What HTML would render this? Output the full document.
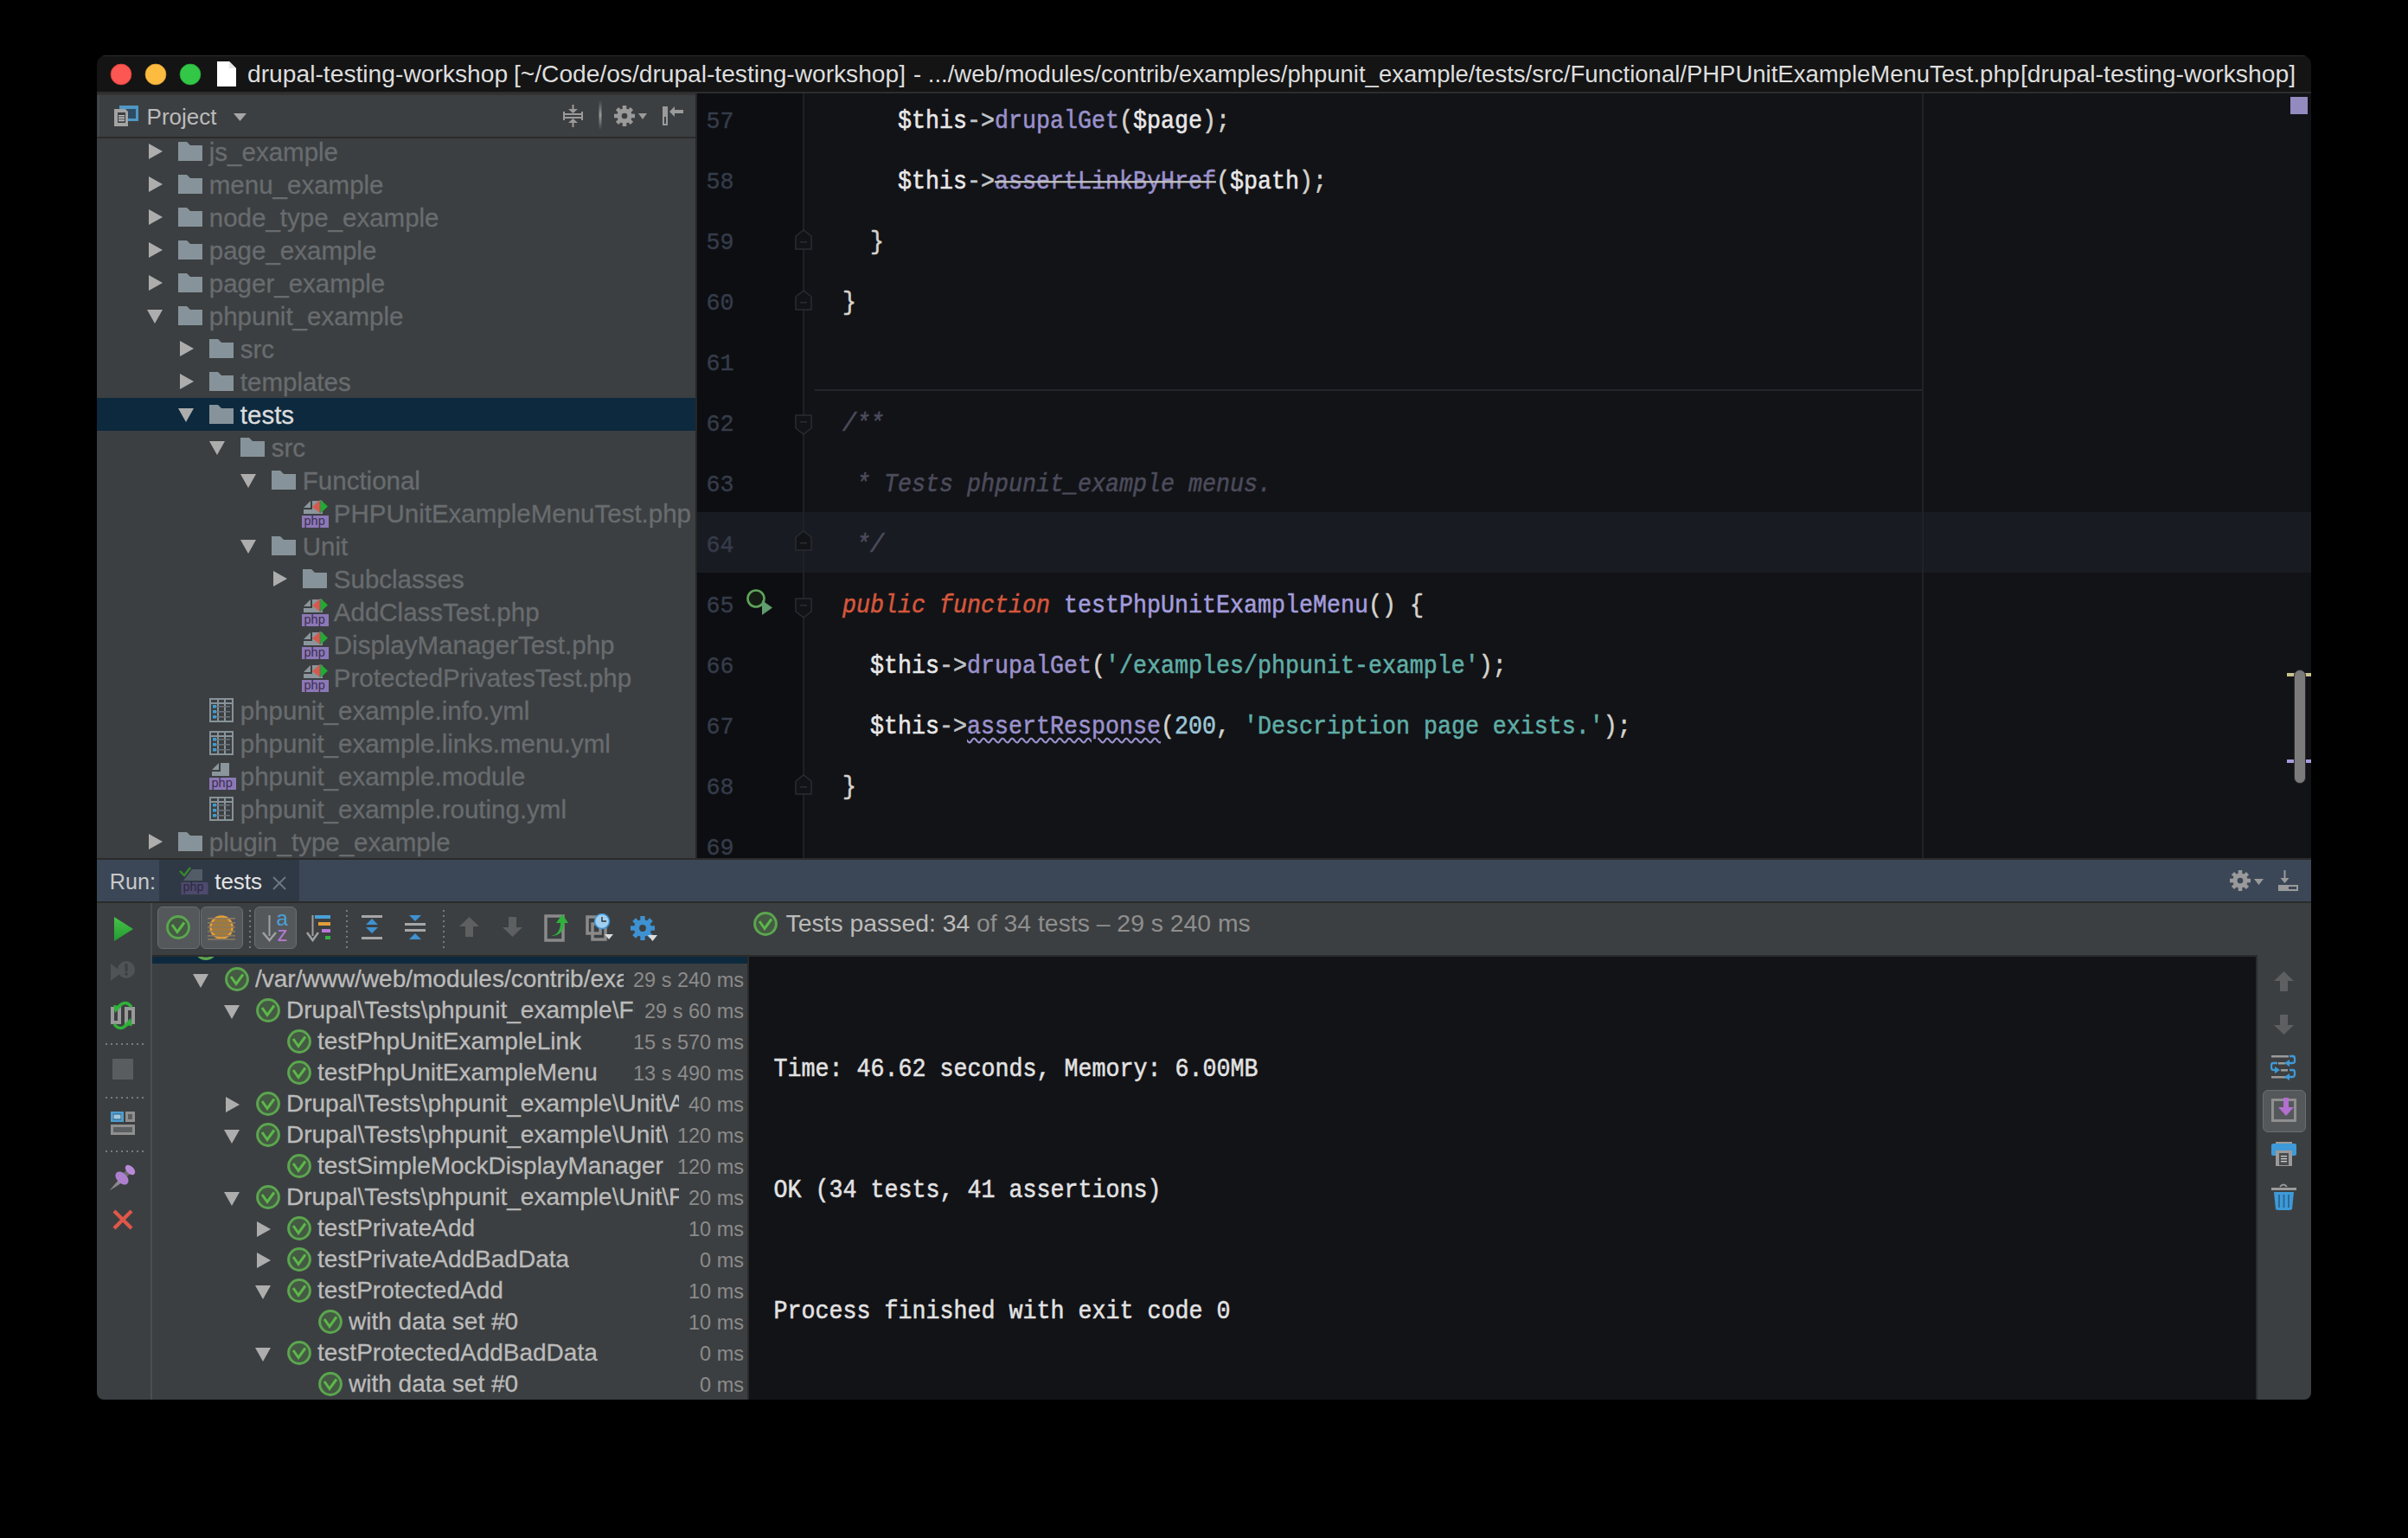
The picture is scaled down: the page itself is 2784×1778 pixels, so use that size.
<!DOCTYPE html>
<html><head><meta charset="utf-8">
<style>
html,body{margin:0;padding:0;background:#000;width:2784px;height:1778px;overflow:hidden}
*{box-sizing:border-box}
.a{position:absolute}
.t{white-space:pre;line-height:1}
.t span{-webkit-text-stroke:inherit}
.s3{-webkit-text-stroke:0.3px currentColor}
svg{display:block}
#win{position:absolute;left:0;top:0;width:2784px;height:1778px;clip-path:inset(64px 112px 160px 112px round 10px 10px 8px 8px);}
</style></head><body>
<div id="win">
<div class="a" style="left:112px;top:64px;width:2560px;height:42px;background:#141414;"></div>
<div class="a" style="left:112px;top:64px;width:2560px;height:1px;background:#2f2f2f;"></div>
<div class="a" style="left:112px;top:106px;width:2560px;height:2px;background:#2d2d2d;"></div>
<div class="a" style="left:112px;top:108px;width:692px;height:2px;background:#333333;"></div>
<div class="a" style="left:112px;top:110px;width:692px;height:48px;background:#3c3f41;"></div>
<div class="a" style="left:113px;top:110px;width:2px;height:48px;background:#45484b;"></div>
<div class="a" style="left:112px;top:158px;width:692px;height:2px;background:#2b2b2b;"></div>
<div class="a" style="left:112px;top:160px;width:692px;height:832px;background:#3c3f41;"></div>
<div class="a" style="left:804px;top:108px;width:2px;height:884px;background:#262626;"></div>
<div class="a" style="left:806px;top:108px;width:122px;height:884px;background:#0d0e12;"></div>
<div class="a" style="left:928px;top:108px;width:2px;height:884px;background:#1e2025;"></div>
<div class="a" style="left:930px;top:108px;width:1742px;height:884px;background:#121317;"></div>
<div class="a" style="left:112px;top:992px;width:2560px;height:2px;background:#2b2b2b;"></div>
<div class="a" style="left:112px;top:994px;width:2560px;height:48px;background:#3b4757;"></div>
<div class="a" style="left:112px;top:1042px;width:2560px;height:2px;background:#2b2b2b;"></div>
<div class="a" style="left:112px;top:1044px;width:2560px;height:574px;background:#3c3f41;"></div>
<div class="a" style="left:174px;top:1044px;width:2px;height:574px;background:#4b4e50;"></div>
<div class="a" style="left:176px;top:1104px;width:2434px;height:2px;background:#2b2b2b;"></div>
<div class="a" style="left:864px;top:1106px;width:2px;height:512px;background:#2b2b2b;"></div>
<div class="a" style="left:866px;top:1106px;width:1742px;height:512px;background:#121317;"></div>
<div class="a" style="left:2608px;top:1104px;width:2px;height:514px;background:#2b2b2b;"></div>
<svg class="a" style="left:127px;top:73px" width="26" height="26" viewBox="0 0 26 26"><circle cx="13" cy="13" r="11.9" fill="#fc5753" stroke="#de3f39" stroke-width="0.8"/></svg>
<svg class="a" style="left:167px;top:73px" width="26" height="26" viewBox="0 0 26 26"><circle cx="13" cy="13" r="11.9" fill="#fdbc40" stroke="#de9f34" stroke-width="0.8"/></svg>
<svg class="a" style="left:207px;top:73px" width="26" height="26" viewBox="0 0 26 26"><circle cx="13" cy="13" r="11.9" fill="#33c748" stroke="#27aa35" stroke-width="0.8"/></svg>
<svg class="a" style="left:250px;top:70px" width="24" height="31" viewBox="0 0 24 31"><path d="M1 1 H15 L23 9 V30 H1 Z" fill="#fff"/><path d="M15 1 V9 H23" fill="#e6e6e6"/></svg>
<div class="a t" style="left:286.0px;top:72.0px;font-family:'Liberation Sans',sans-serif;font-size:27.75px;color:#dedede;transform:scaleX(1.017);transform-origin:0 0">drupal-testing-workshop</div>
<div class="a t" style="left:594.0px;top:72.0px;font-family:'Liberation Sans',sans-serif;font-size:27.75px;color:#dedede;transform:scaleX(1.0144);transform-origin:0 0">[~/Code/os/drupal-testing-workshop]</div>
<div class="a t" style="left:1055.5px;top:72.0px;font-family:'Liberation Sans',sans-serif;font-size:27.75px;color:#dedede;transform:scaleX(0.9907);transform-origin:0 0">- .../web/modules/contrib/examples/phpunit_example/tests/src/Functional/PHPUnitExampleMenuTest.php</div>
<div class="a t" style="left:2335.5px;top:72.0px;font-family:'Liberation Sans',sans-serif;font-size:27.75px;color:#dedede;transform:scaleX(1.0207);transform-origin:0 0">[drupal-testing-workshop]</div>
<svg class="a" style="left:132px;top:121px" width="29" height="26" viewBox="0 0 29 26"><rect x="6" y="1" width="22" height="18" fill="#4f97c4"/><rect x="9" y="5" width="16" height="11" fill="#2d4c63"/><path d="M0 5 H13 L16 8 V25 H0 Z" fill="#a3a3a3"/><rect x="4" y="9" width="9" height="12" fill="#3c3f41"/><rect x="5" y="12" width="7" height="1.2" fill="#c8c8c8"/><rect x="5" y="14" width="7" height="1.2" fill="#c8c8c8"/><rect x="5" y="16" width="7" height="1.2" fill="#c8c8c8"/><rect x="5" y="18" width="7" height="1.2" fill="#c8c8c8"/></svg>
<div class="a t" style="left:169.6px;top:121.7px;font-family:'Liberation Sans',sans-serif;font-size:26px;color:#bbbbbb;">Project</div>
<svg class="a" style="left:270px;top:131px" width="15" height="9" viewBox="0 0 15 9"><path d="M0 0 H15 L7.5 9 Z" fill="#a6a6a6"/></svg>
<svg class="a" style="left:651px;top:120px" width="23" height="28" viewBox="0 0 23 28"><rect x="10.5" y="1" width="2" height="6" fill="#9a9a9a"/><path d="M6 6 H17 L11.5 11 Z" fill="#9a9a9a"/><rect x="0" y="9" width="2" height="10" fill="#9a9a9a"/><rect x="21" y="9" width="2" height="10" fill="#9a9a9a"/><rect x="0" y="11" width="23" height="2" fill="#9a9a9a"/><rect x="0" y="15" width="23" height="2" fill="#9a9a9a"/><path d="M6 22 H17 L11.5 17 Z" fill="#9a9a9a"/><rect x="10.5" y="21" width="2" height="6" fill="#9a9a9a"/></svg>
<svg class="a" style="left:692px;top:116px" width="4" height="34" viewBox="0 0 4 34"><defs><linearGradient id="sg" x1="0" y1="0" x2="0" y2="1"><stop offset="0" stop-color="#3c3f41"/><stop offset="0.5" stop-color="#9a9a9a"/><stop offset="1" stop-color="#3c3f41"/></linearGradient></defs><rect x="0.5" y="0" width="3" height="34" fill="url(#sg)"/></svg>
<svg class="a" style="left:710px;top:122px" width="24" height="24" viewBox="0 0 24 24"><circle cx="12.0" cy="12.0" r="8.64" fill="#9a9a9a"/><rect x="9.719999999999999" y="0" width="4.5600000000000005" height="7.199999999999999" fill="#9a9a9a" transform="rotate(0 12.0 12.0)"/><rect x="9.719999999999999" y="0" width="4.5600000000000005" height="7.199999999999999" fill="#9a9a9a" transform="rotate(45 12.0 12.0)"/><rect x="9.719999999999999" y="0" width="4.5600000000000005" height="7.199999999999999" fill="#9a9a9a" transform="rotate(90 12.0 12.0)"/><rect x="9.719999999999999" y="0" width="4.5600000000000005" height="7.199999999999999" fill="#9a9a9a" transform="rotate(135 12.0 12.0)"/><rect x="9.719999999999999" y="0" width="4.5600000000000005" height="7.199999999999999" fill="#9a9a9a" transform="rotate(180 12.0 12.0)"/><rect x="9.719999999999999" y="0" width="4.5600000000000005" height="7.199999999999999" fill="#9a9a9a" transform="rotate(225 12.0 12.0)"/><rect x="9.719999999999999" y="0" width="4.5600000000000005" height="7.199999999999999" fill="#9a9a9a" transform="rotate(270 12.0 12.0)"/><rect x="9.719999999999999" y="0" width="4.5600000000000005" height="7.199999999999999" fill="#9a9a9a" transform="rotate(315 12.0 12.0)"/><circle cx="12.0" cy="12.0" r="3.3600000000000003" fill="#3c3f41"/></svg>
<svg class="a" style="left:738px;top:131px" width="10" height="7" viewBox="0 0 10 7"><path d="M0 0 H10 L5 7 Z" fill="#9a9a9a"/></svg>
<svg class="a" style="left:765px;top:122px" width="26" height="24" viewBox="0 0 26 24"><rect x="1" y="1" width="6" height="22" fill="#9a9a9a"/><rect x="3" y="13" width="2" height="8" fill="#3c3f41"/><path d="M9 7 L15 1 V5 H25 V9 H15 V13 Z" fill="#9a9a9a"/></svg>
<div class="a" style="left:112px;top:460px;width:692px;height:38px;background:#0d293e;"></div>
<div class="a" style="left:112px;top:160px;width:692px;height:832px;overflow:hidden">
<div class="a" style="left:-112px;top:-160px;width:2784px;height:1778px">
<svg class="a" style="left:172px;top:166px" width="16" height="18" viewBox="0 0 16 18"><path d="M0 0 L16 9 L0 18 Z" fill="#adadad"/></svg>
<svg class="a" style="left:206px;top:164px" width="28" height="22" viewBox="0 0 28 22"><path d="M0 0 H10 L14 4 H28 V22 H0 Z" fill="#87939a"/></svg>
<div class="a t" style="left:241.8px;top:160.9px;font-family:'Liberation Sans',sans-serif;font-size:29.5px;color:#686c6f;-webkit-text-stroke:0.3px currentColor">js_example</div>
<svg class="a" style="left:172px;top:204px" width="16" height="18" viewBox="0 0 16 18"><path d="M0 0 L16 9 L0 18 Z" fill="#adadad"/></svg>
<svg class="a" style="left:206px;top:202px" width="28" height="22" viewBox="0 0 28 22"><path d="M0 0 H10 L14 4 H28 V22 H0 Z" fill="#87939a"/></svg>
<div class="a t" style="left:241.8px;top:198.9px;font-family:'Liberation Sans',sans-serif;font-size:29.5px;color:#686c6f;-webkit-text-stroke:0.3px currentColor">menu_example</div>
<svg class="a" style="left:172px;top:242px" width="16" height="18" viewBox="0 0 16 18"><path d="M0 0 L16 9 L0 18 Z" fill="#adadad"/></svg>
<svg class="a" style="left:206px;top:240px" width="28" height="22" viewBox="0 0 28 22"><path d="M0 0 H10 L14 4 H28 V22 H0 Z" fill="#87939a"/></svg>
<div class="a t" style="left:241.8px;top:236.9px;font-family:'Liberation Sans',sans-serif;font-size:29.5px;color:#686c6f;-webkit-text-stroke:0.3px currentColor">node_type_example</div>
<svg class="a" style="left:172px;top:280px" width="16" height="18" viewBox="0 0 16 18"><path d="M0 0 L16 9 L0 18 Z" fill="#adadad"/></svg>
<svg class="a" style="left:206px;top:278px" width="28" height="22" viewBox="0 0 28 22"><path d="M0 0 H10 L14 4 H28 V22 H0 Z" fill="#87939a"/></svg>
<div class="a t" style="left:241.8px;top:274.9px;font-family:'Liberation Sans',sans-serif;font-size:29.5px;color:#686c6f;-webkit-text-stroke:0.3px currentColor">page_example</div>
<svg class="a" style="left:172px;top:318px" width="16" height="18" viewBox="0 0 16 18"><path d="M0 0 L16 9 L0 18 Z" fill="#adadad"/></svg>
<svg class="a" style="left:206px;top:316px" width="28" height="22" viewBox="0 0 28 22"><path d="M0 0 H10 L14 4 H28 V22 H0 Z" fill="#87939a"/></svg>
<div class="a t" style="left:241.8px;top:312.9px;font-family:'Liberation Sans',sans-serif;font-size:29.5px;color:#686c6f;-webkit-text-stroke:0.3px currentColor">pager_example</div>
<svg class="a" style="left:170px;top:358px" width="18" height="16" viewBox="0 0 18 16"><path d="M0 0 H18 L9 16 Z" fill="#adadad"/></svg>
<svg class="a" style="left:206px;top:354px" width="28" height="22" viewBox="0 0 28 22"><path d="M0 0 H10 L14 4 H28 V22 H0 Z" fill="#87939a"/></svg>
<div class="a t" style="left:241.8px;top:350.9px;font-family:'Liberation Sans',sans-serif;font-size:29.5px;color:#686c6f;-webkit-text-stroke:0.3px currentColor">phpunit_example</div>
<svg class="a" style="left:208px;top:394px" width="16" height="18" viewBox="0 0 16 18"><path d="M0 0 L16 9 L0 18 Z" fill="#adadad"/></svg>
<svg class="a" style="left:242px;top:392px" width="28" height="22" viewBox="0 0 28 22"><path d="M0 0 H10 L14 4 H28 V22 H0 Z" fill="#87939a"/></svg>
<div class="a t" style="left:277.8px;top:388.9px;font-family:'Liberation Sans',sans-serif;font-size:29.5px;color:#686c6f;-webkit-text-stroke:0.3px currentColor">src</div>
<svg class="a" style="left:208px;top:432px" width="16" height="18" viewBox="0 0 16 18"><path d="M0 0 L16 9 L0 18 Z" fill="#adadad"/></svg>
<svg class="a" style="left:242px;top:430px" width="28" height="22" viewBox="0 0 28 22"><path d="M0 0 H10 L14 4 H28 V22 H0 Z" fill="#87939a"/></svg>
<div class="a t" style="left:277.8px;top:426.9px;font-family:'Liberation Sans',sans-serif;font-size:29.5px;color:#686c6f;-webkit-text-stroke:0.3px currentColor">templates</div>
<svg class="a" style="left:206px;top:472px" width="18" height="16" viewBox="0 0 18 16"><path d="M0 0 H18 L9 16 Z" fill="#adadad"/></svg>
<svg class="a" style="left:242px;top:468px" width="28" height="22" viewBox="0 0 28 22"><path d="M0 0 H10 L14 4 H28 V22 H0 Z" fill="#87939a"/></svg>
<div class="a t" style="left:277.8px;top:464.9px;font-family:'Liberation Sans',sans-serif;font-size:29.5px;color:#dcdcdc;-webkit-text-stroke:0.3px currentColor">tests</div>
<svg class="a" style="left:242px;top:510px" width="18" height="16" viewBox="0 0 18 16"><path d="M0 0 H18 L9 16 Z" fill="#adadad"/></svg>
<svg class="a" style="left:278px;top:506px" width="28" height="22" viewBox="0 0 28 22"><path d="M0 0 H10 L14 4 H28 V22 H0 Z" fill="#87939a"/></svg>
<div class="a t" style="left:313.8px;top:502.9px;font-family:'Liberation Sans',sans-serif;font-size:29.5px;color:#686c6f;-webkit-text-stroke:0.3px currentColor">src</div>
<svg class="a" style="left:278px;top:548px" width="18" height="16" viewBox="0 0 18 16"><path d="M0 0 H18 L9 16 Z" fill="#adadad"/></svg>
<svg class="a" style="left:314px;top:544px" width="28" height="22" viewBox="0 0 28 22"><path d="M0 0 H10 L14 4 H28 V22 H0 Z" fill="#87939a"/></svg>
<div class="a t" style="left:349.8px;top:540.9px;font-family:'Liberation Sans',sans-serif;font-size:29.5px;color:#686c6f;-webkit-text-stroke:0.3px currentColor">Functional</div>
<svg class="a" style="left:349px;top:578px" width="31" height="18" viewBox="0 0 31 18"><path d="M2 9 L10 1 V9 Z" fill="#8a969c"/><path d="M12 1 H24 V16 H2 V11 H12 Z" fill="#8a969c"/><path d="M12 8 L21 0 V15 Z" fill="#d65a4a"/><rect x="20.5" y="0" width="1.5" height="15" fill="#6b6f72"/><path d="M22 0 L30 7.5 L22 15 Z" fill="#20ad2e"/></svg>
<div class="a" style="left:349px;top:596px;width:31px;height:14px;background:#8c78b6;overflow:hidden"><div class="a t" style="left:2.5px;top:-0.8px;font-family:'Liberation Sans',sans-serif;font-size:14.5px;color:#3a2f52;line-height:1">php</div></div>
<div class="a t" style="left:385.8px;top:578.9px;font-family:'Liberation Sans',sans-serif;font-size:29.5px;color:#686c6f;-webkit-text-stroke:0.3px currentColor">PHPUnitExampleMenuTest.php</div>
<svg class="a" style="left:278px;top:624px" width="18" height="16" viewBox="0 0 18 16"><path d="M0 0 H18 L9 16 Z" fill="#adadad"/></svg>
<svg class="a" style="left:314px;top:620px" width="28" height="22" viewBox="0 0 28 22"><path d="M0 0 H10 L14 4 H28 V22 H0 Z" fill="#87939a"/></svg>
<div class="a t" style="left:349.8px;top:616.9px;font-family:'Liberation Sans',sans-serif;font-size:29.5px;color:#686c6f;-webkit-text-stroke:0.3px currentColor">Unit</div>
<svg class="a" style="left:316px;top:660px" width="16" height="18" viewBox="0 0 16 18"><path d="M0 0 L16 9 L0 18 Z" fill="#adadad"/></svg>
<svg class="a" style="left:350px;top:658px" width="28" height="22" viewBox="0 0 28 22"><path d="M0 0 H10 L14 4 H28 V22 H0 Z" fill="#87939a"/></svg>
<div class="a t" style="left:385.8px;top:654.9px;font-family:'Liberation Sans',sans-serif;font-size:29.5px;color:#686c6f;-webkit-text-stroke:0.3px currentColor">Subclasses</div>
<svg class="a" style="left:349px;top:692px" width="31" height="18" viewBox="0 0 31 18"><path d="M2 9 L10 1 V9 Z" fill="#8a969c"/><path d="M12 1 H24 V16 H2 V11 H12 Z" fill="#8a969c"/><path d="M12 8 L21 0 V15 Z" fill="#d65a4a"/><rect x="20.5" y="0" width="1.5" height="15" fill="#6b6f72"/><path d="M22 0 L30 7.5 L22 15 Z" fill="#20ad2e"/></svg>
<div class="a" style="left:349px;top:710px;width:31px;height:14px;background:#8c78b6;overflow:hidden"><div class="a t" style="left:2.5px;top:-0.8px;font-family:'Liberation Sans',sans-serif;font-size:14.5px;color:#3a2f52;line-height:1">php</div></div>
<div class="a t" style="left:385.8px;top:692.9px;font-family:'Liberation Sans',sans-serif;font-size:29.5px;color:#686c6f;-webkit-text-stroke:0.3px currentColor">AddClassTest.php</div>
<svg class="a" style="left:349px;top:730px" width="31" height="18" viewBox="0 0 31 18"><path d="M2 9 L10 1 V9 Z" fill="#8a969c"/><path d="M12 1 H24 V16 H2 V11 H12 Z" fill="#8a969c"/><path d="M12 8 L21 0 V15 Z" fill="#d65a4a"/><rect x="20.5" y="0" width="1.5" height="15" fill="#6b6f72"/><path d="M22 0 L30 7.5 L22 15 Z" fill="#20ad2e"/></svg>
<div class="a" style="left:349px;top:748px;width:31px;height:14px;background:#8c78b6;overflow:hidden"><div class="a t" style="left:2.5px;top:-0.8px;font-family:'Liberation Sans',sans-serif;font-size:14.5px;color:#3a2f52;line-height:1">php</div></div>
<div class="a t" style="left:385.8px;top:730.9px;font-family:'Liberation Sans',sans-serif;font-size:29.5px;color:#686c6f;-webkit-text-stroke:0.3px currentColor">DisplayManagerTest.php</div>
<svg class="a" style="left:349px;top:768px" width="31" height="18" viewBox="0 0 31 18"><path d="M2 9 L10 1 V9 Z" fill="#8a969c"/><path d="M12 1 H24 V16 H2 V11 H12 Z" fill="#8a969c"/><path d="M12 8 L21 0 V15 Z" fill="#d65a4a"/><rect x="20.5" y="0" width="1.5" height="15" fill="#6b6f72"/><path d="M22 0 L30 7.5 L22 15 Z" fill="#20ad2e"/></svg>
<div class="a" style="left:349px;top:786px;width:31px;height:14px;background:#8c78b6;overflow:hidden"><div class="a t" style="left:2.5px;top:-0.8px;font-family:'Liberation Sans',sans-serif;font-size:14.5px;color:#3a2f52;line-height:1">php</div></div>
<div class="a t" style="left:385.8px;top:768.9px;font-family:'Liberation Sans',sans-serif;font-size:29.5px;color:#686c6f;-webkit-text-stroke:0.3px currentColor">ProtectedPrivatesTest.php</div>
<svg class="a" style="left:242px;top:807px" width="28" height="28" viewBox="0 0 28 28"><rect x="1" y="1" width="26" height="26" fill="none" stroke="#87939a" stroke-width="2"/><rect x="2" y="5" width="24" height="2" fill="#87939a"/><rect x="9" y="2" width="2" height="24" fill="#87939a"/><rect x="17" y="2" width="2" height="24" fill="#87939a"/><rect x="4" y="8" width="4" height="3.5" fill="#3d9ccf"/><rect x="8" y="9" width="16" height="1.5" fill="#6b7378"/><rect x="4" y="14" width="4" height="3.5" fill="#3d9ccf"/><rect x="8" y="15" width="16" height="1.5" fill="#6b7378"/><rect x="4" y="20" width="4" height="3.5" fill="#3d9ccf"/><rect x="8" y="21" width="16" height="1.5" fill="#6b7378"/></svg>
<div class="a t" style="left:277.8px;top:806.9px;font-family:'Liberation Sans',sans-serif;font-size:29.5px;color:#686c6f;-webkit-text-stroke:0.3px currentColor">phpunit_example.info.yml</div>
<svg class="a" style="left:242px;top:845px" width="28" height="28" viewBox="0 0 28 28"><rect x="1" y="1" width="26" height="26" fill="none" stroke="#87939a" stroke-width="2"/><rect x="2" y="5" width="24" height="2" fill="#87939a"/><rect x="9" y="2" width="2" height="24" fill="#87939a"/><rect x="17" y="2" width="2" height="24" fill="#87939a"/><rect x="4" y="8" width="4" height="3.5" fill="#3d9ccf"/><rect x="8" y="9" width="16" height="1.5" fill="#6b7378"/><rect x="4" y="14" width="4" height="3.5" fill="#3d9ccf"/><rect x="8" y="15" width="16" height="1.5" fill="#6b7378"/><rect x="4" y="20" width="4" height="3.5" fill="#3d9ccf"/><rect x="8" y="21" width="16" height="1.5" fill="#6b7378"/></svg>
<div class="a t" style="left:277.8px;top:844.9px;font-family:'Liberation Sans',sans-serif;font-size:29.5px;color:#686c6f;-webkit-text-stroke:0.3px currentColor">phpunit_example.links.menu.yml</div>
<svg class="a" style="left:243px;top:881px" width="24" height="18" viewBox="0 0 24 18"><path d="M2 9 L10 1 V9 Z" fill="#8a969c"/><path d="M12 1 H22 V16 H2 V11 H12 Z" fill="#8a969c"/></svg>
<div class="a" style="left:242px;top:899px;width:31px;height:14px;background:#8c78b6;overflow:hidden"><div class="a t" style="left:2.5px;top:-0.8px;font-family:'Liberation Sans',sans-serif;font-size:14.5px;color:#3a2f52;line-height:1">php</div></div>
<div class="a t" style="left:277.8px;top:882.9px;font-family:'Liberation Sans',sans-serif;font-size:29.5px;color:#686c6f;-webkit-text-stroke:0.3px currentColor">phpunit_example.module</div>
<svg class="a" style="left:242px;top:921px" width="28" height="28" viewBox="0 0 28 28"><rect x="1" y="1" width="26" height="26" fill="none" stroke="#87939a" stroke-width="2"/><rect x="2" y="5" width="24" height="2" fill="#87939a"/><rect x="9" y="2" width="2" height="24" fill="#87939a"/><rect x="17" y="2" width="2" height="24" fill="#87939a"/><rect x="4" y="8" width="4" height="3.5" fill="#3d9ccf"/><rect x="8" y="9" width="16" height="1.5" fill="#6b7378"/><rect x="4" y="14" width="4" height="3.5" fill="#3d9ccf"/><rect x="8" y="15" width="16" height="1.5" fill="#6b7378"/><rect x="4" y="20" width="4" height="3.5" fill="#3d9ccf"/><rect x="8" y="21" width="16" height="1.5" fill="#6b7378"/></svg>
<div class="a t" style="left:277.8px;top:920.9px;font-family:'Liberation Sans',sans-serif;font-size:29.5px;color:#686c6f;-webkit-text-stroke:0.3px currentColor">phpunit_example.routing.yml</div>
<svg class="a" style="left:172px;top:964px" width="16" height="18" viewBox="0 0 16 18"><path d="M0 0 L16 9 L0 18 Z" fill="#adadad"/></svg>
<svg class="a" style="left:206px;top:962px" width="28" height="22" viewBox="0 0 28 22"><path d="M0 0 H10 L14 4 H28 V22 H0 Z" fill="#87939a"/></svg>
<div class="a t" style="left:241.8px;top:958.9px;font-family:'Liberation Sans',sans-serif;font-size:29.5px;color:#686c6f;-webkit-text-stroke:0.3px currentColor">plugin_type_example</div>
</div></div>
<div class="a" style="left:806px;top:592px;width:122px;height:70px;background:#191b22;"></div>
<div class="a" style="left:930px;top:592px;width:1742px;height:70px;background:#191b22;"></div>
<div class="a" style="left:928px;top:592px;width:2px;height:70px;background:#1e2128;"></div>
<div class="a" style="left:2222px;top:108px;width:2px;height:884px;background:#202228;"></div>
<div class="a" style="left:942px;top:450px;width:1280px;height:2px;background:#24262c;"></div>
<div class="a t" style="left:816.5px;top:127.7px;font-family:'Liberation Mono',monospace;font-size:26.666666666666668px;color:#353c4a;transform:scaleY(1.06);transform-origin:0 76%;-webkit-text-stroke:0.4px currentColor">57</div>
<div class="a t" style="left:816.5px;top:197.7px;font-family:'Liberation Mono',monospace;font-size:26.666666666666668px;color:#353c4a;transform:scaleY(1.06);transform-origin:0 76%;-webkit-text-stroke:0.4px currentColor">58</div>
<div class="a t" style="left:816.5px;top:267.7px;font-family:'Liberation Mono',monospace;font-size:26.666666666666668px;color:#353c4a;transform:scaleY(1.06);transform-origin:0 76%;-webkit-text-stroke:0.4px currentColor">59</div>
<div class="a t" style="left:816.5px;top:337.7px;font-family:'Liberation Mono',monospace;font-size:26.666666666666668px;color:#353c4a;transform:scaleY(1.06);transform-origin:0 76%;-webkit-text-stroke:0.4px currentColor">60</div>
<div class="a t" style="left:816.5px;top:407.7px;font-family:'Liberation Mono',monospace;font-size:26.666666666666668px;color:#353c4a;transform:scaleY(1.06);transform-origin:0 76%;-webkit-text-stroke:0.4px currentColor">61</div>
<div class="a t" style="left:816.5px;top:477.7px;font-family:'Liberation Mono',monospace;font-size:26.666666666666668px;color:#353c4a;transform:scaleY(1.06);transform-origin:0 76%;-webkit-text-stroke:0.4px currentColor">62</div>
<div class="a t" style="left:816.5px;top:547.7px;font-family:'Liberation Mono',monospace;font-size:26.666666666666668px;color:#353c4a;transform:scaleY(1.06);transform-origin:0 76%;-webkit-text-stroke:0.4px currentColor">63</div>
<div class="a t" style="left:816.5px;top:617.7px;font-family:'Liberation Mono',monospace;font-size:26.666666666666668px;color:#353c4a;transform:scaleY(1.06);transform-origin:0 76%;-webkit-text-stroke:0.4px currentColor">64</div>
<div class="a t" style="left:816.5px;top:687.7px;font-family:'Liberation Mono',monospace;font-size:26.666666666666668px;color:#353c4a;transform:scaleY(1.06);transform-origin:0 76%;-webkit-text-stroke:0.4px currentColor">65</div>
<div class="a t" style="left:816.5px;top:757.7px;font-family:'Liberation Mono',monospace;font-size:26.666666666666668px;color:#353c4a;transform:scaleY(1.06);transform-origin:0 76%;-webkit-text-stroke:0.4px currentColor">66</div>
<div class="a t" style="left:816.5px;top:827.7px;font-family:'Liberation Mono',monospace;font-size:26.666666666666668px;color:#353c4a;transform:scaleY(1.06);transform-origin:0 76%;-webkit-text-stroke:0.4px currentColor">67</div>
<div class="a t" style="left:816.5px;top:897.7px;font-family:'Liberation Mono',monospace;font-size:26.666666666666668px;color:#353c4a;transform:scaleY(1.06);transform-origin:0 76%;-webkit-text-stroke:0.4px currentColor">68</div>
<div class="a t" style="left:816.5px;top:967.7px;font-family:'Liberation Mono',monospace;font-size:26.666666666666668px;color:#353c4a;transform:scaleY(1.06);transform-origin:0 76%;-webkit-text-stroke:0.4px currentColor">69</div>
<div class="a t" style="left:942.0px;top:127.7px;font-family:'Liberation Mono',monospace;font-size:26.666666666666668px;color:#e6e6e6;transform:scaleY(1.1);transform-origin:0 76%;-webkit-text-stroke:0.5px currentColor">      <span style="color:#e8e8e8">$this</span><span style="color:#c0c4c6">-&gt;</span><span style="color:#9a91cb">drupalGet</span><span style="color:#d6d3cc">(</span><span style="color:#e8e8e8">$page</span><span style="color:#d6d3cc">);</span></div>
<div class="a t" style="left:942.0px;top:197.7px;font-family:'Liberation Mono',monospace;font-size:26.666666666666668px;color:#e6e6e6;transform:scaleY(1.1);transform-origin:0 76%;-webkit-text-stroke:0.5px currentColor">      <span style="color:#e8e8e8">$this</span><span style="color:#c0c4c6">-&gt;</span><span style="color:#9a91cb;text-decoration:line-through;text-decoration-color:#c8c8c8;text-decoration-thickness:2px">assertLinkByHref</span><span style="color:#d6d3cc">(</span><span style="color:#e8e8e8">$path</span><span style="color:#d6d3cc">);</span></div>
<div class="a t" style="left:942.0px;top:267.7px;font-family:'Liberation Mono',monospace;font-size:26.666666666666668px;color:#e6e6e6;transform:scaleY(1.1);transform-origin:0 76%;-webkit-text-stroke:0.5px currentColor">    <span style="color:#d6d3cc">}</span></div>
<div class="a t" style="left:942.0px;top:337.7px;font-family:'Liberation Mono',monospace;font-size:26.666666666666668px;color:#e6e6e6;transform:scaleY(1.1);transform-origin:0 76%;-webkit-text-stroke:0.5px currentColor">  <span style="color:#d6d3cc">}</span></div>
<div class="a t" style="left:942.0px;top:477.7px;font-family:'Liberation Mono',monospace;font-size:26.666666666666668px;color:#e6e6e6;transform:scaleY(1.1);transform-origin:0 76%;-webkit-text-stroke:0.5px currentColor">  <span style="color:#4c4b5b;font-style:italic">/**</span></div>
<div class="a t" style="left:942.0px;top:547.7px;font-family:'Liberation Mono',monospace;font-size:26.666666666666668px;color:#e6e6e6;transform:scaleY(1.1);transform-origin:0 76%;-webkit-text-stroke:0.5px currentColor">   <span style="color:#4c4b5b;font-style:italic">* Tests phpunit_example menus.</span></div>
<div class="a t" style="left:942.0px;top:617.7px;font-family:'Liberation Mono',monospace;font-size:26.666666666666668px;color:#e6e6e6;transform:scaleY(1.1);transform-origin:0 76%;-webkit-text-stroke:0.5px currentColor">   <span style="color:#4c4b5b;font-style:italic">*/</span></div>
<div class="a t" style="left:942.0px;top:687.7px;font-family:'Liberation Mono',monospace;font-size:26.666666666666668px;color:#e6e6e6;transform:scaleY(1.1);transform-origin:0 76%;-webkit-text-stroke:0.5px currentColor">  <span style="color:#d5573b;font-style:italic">public</span> <span style="color:#d5573b;font-style:italic">function</span> <span style="color:#a39cdc">testPhpUnitExampleMenu</span><span style="color:#d6d3cc">() {</span></div>
<div class="a t" style="left:942.0px;top:757.7px;font-family:'Liberation Mono',monospace;font-size:26.666666666666668px;color:#e6e6e6;transform:scaleY(1.1);transform-origin:0 76%;-webkit-text-stroke:0.5px currentColor">    <span style="color:#e8e8e8">$this</span><span style="color:#c0c4c6">-&gt;</span><span style="color:#9a91cb">drupalGet</span><span style="color:#d6d3cc">(</span><span style="color:#5fada5">&#x27;/examples/phpunit-example&#x27;</span><span style="color:#d6d3cc">);</span></div>
<div class="a t" style="left:942.0px;top:827.7px;font-family:'Liberation Mono',monospace;font-size:26.666666666666668px;color:#e6e6e6;transform:scaleY(1.1);transform-origin:0 76%;-webkit-text-stroke:0.5px currentColor">    <span style="color:#e8e8e8">$this</span><span style="color:#c0c4c6">-&gt;</span><span style="color:#9a91cb;text-decoration:underline wavy #9a91cb;text-decoration-thickness:1.5px;text-underline-offset:4px">assertResponse</span><span style="color:#d6d3cc">(</span><span style="color:#9cc5d8">200</span><span style="color:#d6d3cc">, </span><span style="color:#5fada5">&#x27;Description page exists.&#x27;</span><span style="color:#d6d3cc">);</span></div>
<div class="a t" style="left:942.0px;top:897.7px;font-family:'Liberation Mono',monospace;font-size:26.666666666666668px;color:#e6e6e6;transform:scaleY(1.1);transform-origin:0 76%;-webkit-text-stroke:0.5px currentColor">  <span style="color:#d6d3cc">}</span></div>
<svg class="a" style="left:919px;top:265px" width="20" height="24" viewBox="0 0 20 24"><path d="M1 8 L10 1 L19 8 V23 H1 Z" fill="#121317" stroke="#2a2c32" stroke-width="1.5"/><rect x="6" y="14" width="8" height="1.5" fill="#2a2c32"/></svg>
<svg class="a" style="left:919px;top:335px" width="20" height="24" viewBox="0 0 20 24"><path d="M1 8 L10 1 L19 8 V23 H1 Z" fill="#121317" stroke="#2a2c32" stroke-width="1.5"/><rect x="6" y="14" width="8" height="1.5" fill="#2a2c32"/></svg>
<svg class="a" style="left:919px;top:479px" width="20" height="24" viewBox="0 0 20 24"><path d="M1 1 H19 V16 L10 23 L1 16 Z" fill="#121317" stroke="#2a2c32" stroke-width="1.5"/><rect x="6" y="8" width="8" height="1.5" fill="#2a2c32"/></svg>
<svg class="a" style="left:919px;top:613px" width="20" height="24" viewBox="0 0 20 24"><path d="M1 8 L10 1 L19 8 V23 H1 Z" fill="#121317" stroke="#2a2c32" stroke-width="1.5"/><rect x="6" y="14" width="8" height="1.5" fill="#2a2c32"/></svg>
<svg class="a" style="left:919px;top:691px" width="20" height="24" viewBox="0 0 20 24"><path d="M1 1 H19 V16 L10 23 L1 16 Z" fill="#121317" stroke="#2a2c32" stroke-width="1.5"/><rect x="6" y="8" width="8" height="1.5" fill="#2a2c32"/></svg>
<svg class="a" style="left:919px;top:895px" width="20" height="24" viewBox="0 0 20 24"><path d="M1 8 L10 1 L19 8 V23 H1 Z" fill="#121317" stroke="#2a2c32" stroke-width="1.5"/><rect x="6" y="14" width="8" height="1.5" fill="#2a2c32"/></svg>
<svg class="a" style="left:862px;top:680px" width="34" height="34" viewBox="0 0 34 34"><circle cx="12" cy="12" r="9.5" fill="#141c14" stroke="#5ea45a" stroke-width="2.6"/><path d="M19 14 L31 22.5 L19 31 Z" fill="#5f9e6e"/></svg>
<div class="a" style="left:2644px;top:778px;width:28px;height:4px;background:#c9c38a;"></div>
<div class="a" style="left:2644px;top:878px;width:28px;height:4px;background:#a79be0;"></div>
<div class="a" style="left:2652px;top:774px;width:14px;height:132px;background:#7b7b7b;border-radius:7px;border:1px solid #2a2a2a"></div>
<div class="a" style="left:2648px;top:112px;width:20px;height:20px;background:#938ac0;"></div>
<div class="a t" style="left:126.8px;top:1006.8px;font-family:'Liberation Sans',sans-serif;font-size:25.2px;color:#c9c9c9;">Run:</div>
<div class="a" style="left:184px;top:994px;width:162px;height:48px;background:#2f3945;"></div>
<svg class="a" style="left:207px;top:1001px" width="34" height="34" viewBox="0 0 34 34"><path d="M5 17 L15 4 H27 V17 Z" fill="#525c66"/><path d="M1 6 L6 11 L13 2" fill="none" stroke="#388a2c" stroke-width="2.4"/><rect x="2.5" y="19" width="31" height="14" fill="#4e4a6e"/></svg>
<div class="a t" style="left:211.5px;top:1018.3px;font-family:'Liberation Sans',sans-serif;font-size:14.3px;color:#2c2840;">php</div>
<div class="a t" style="left:248.2px;top:1006.1px;font-family:'Liberation Sans',sans-serif;font-size:26px;color:#e4e4e4;">tests</div>
<svg class="a" style="left:315px;top:1013px" width="16" height="16" viewBox="0 0 16 16"><path d="M1 1 L15 15 M15 1 L1 15" stroke="#6e7780" stroke-width="2"/></svg>
<svg class="a" style="left:2578px;top:1006px" width="24" height="24" viewBox="0 0 24 24"><circle cx="12.0" cy="12.0" r="8.64" fill="#9a9a9a"/><rect x="9.719999999999999" y="0" width="4.5600000000000005" height="7.199999999999999" fill="#9a9a9a" transform="rotate(0 12.0 12.0)"/><rect x="9.719999999999999" y="0" width="4.5600000000000005" height="7.199999999999999" fill="#9a9a9a" transform="rotate(45 12.0 12.0)"/><rect x="9.719999999999999" y="0" width="4.5600000000000005" height="7.199999999999999" fill="#9a9a9a" transform="rotate(90 12.0 12.0)"/><rect x="9.719999999999999" y="0" width="4.5600000000000005" height="7.199999999999999" fill="#9a9a9a" transform="rotate(135 12.0 12.0)"/><rect x="9.719999999999999" y="0" width="4.5600000000000005" height="7.199999999999999" fill="#9a9a9a" transform="rotate(180 12.0 12.0)"/><rect x="9.719999999999999" y="0" width="4.5600000000000005" height="7.199999999999999" fill="#9a9a9a" transform="rotate(225 12.0 12.0)"/><rect x="9.719999999999999" y="0" width="4.5600000000000005" height="7.199999999999999" fill="#9a9a9a" transform="rotate(270 12.0 12.0)"/><rect x="9.719999999999999" y="0" width="4.5600000000000005" height="7.199999999999999" fill="#9a9a9a" transform="rotate(315 12.0 12.0)"/><circle cx="12.0" cy="12.0" r="3.3600000000000003" fill="#3b4757"/></svg>
<svg class="a" style="left:2606px;top:1016px" width="11" height="7" viewBox="0 0 11 7"><path d="M0 0 H11 L5.5 7 Z" fill="#9a9a9a"/></svg>
<svg class="a" style="left:2634px;top:1005px" width="24" height="26" viewBox="0 0 24 26"><rect x="6.5" y="1" width="2" height="10" fill="#9a9a9a"/><path d="M2.5 10 H12.5 L7.5 16 Z" fill="#9a9a9a"/><rect x="0" y="18" width="23" height="7" fill="#9a9a9a"/><rect x="12" y="20" width="9" height="3" fill="#3b4757"/></svg>
<svg class="a" style="left:131px;top:1059px" width="24" height="30" viewBox="0 0 24 30"><defs><linearGradient id="pg" x1="0" y1="0" x2="0" y2="1"><stop offset="0" stop-color="#49c24a"/><stop offset="1" stop-color="#229a31"/></linearGradient></defs><path d="M1 1 L23 15 L1 29 Z" fill="url(#pg)"/></svg>
<svg class="a" style="left:127px;top:1108px" width="32" height="32" viewBox="0 0 32 32"><path d="M1 6 L14 16 L1 26 Z" fill="#505356"/><circle cx="19" cy="13" r="10" fill="#505356"/><rect x="17.5" y="6" width="3" height="9" fill="#3c3f41"/><circle cx="19" cy="18" r="1.8" fill="#3c3f41"/></svg>
<svg class="a" style="left:127px;top:1156px" width="30" height="36" viewBox="0 0 30 36"><path d="M1 8 H5 V24 H9 V8 H13 V28 H1 Z" fill="#9a9a9a"/><path d="M17 28 H21 V12 H25 V28 H29 V8 H17 Z" fill="#9a9a9a"/><path d="M25 8 Q18 -1 10 8" fill="none" stroke="#2fb13a" stroke-width="3.5"/><path d="M4 6 L14 7 L6 15 Z" fill="#2fb13a"/><path d="M5 28 Q12 37 20 28" fill="none" stroke="#2fb13a" stroke-width="3.5"/><path d="M26 30 L16 29 L24 21 Z" fill="#2fb13a"/></svg>
<svg class="a" style="left:122px;top:1206px" width="46" height="3" viewBox="0 0 46 3"><rect x="0" y="0" width="2" height="2" fill="#7a7a7a"/><rect x="6" y="0" width="2" height="2" fill="#7a7a7a"/><rect x="12" y="0" width="2" height="2" fill="#7a7a7a"/><rect x="18" y="0" width="2" height="2" fill="#7a7a7a"/><rect x="24" y="0" width="2" height="2" fill="#7a7a7a"/><rect x="30" y="0" width="2" height="2" fill="#7a7a7a"/><rect x="36" y="0" width="2" height="2" fill="#7a7a7a"/><rect x="42" y="0" width="2" height="2" fill="#7a7a7a"/></svg>
<svg class="a" style="left:122px;top:1268px" width="46" height="3" viewBox="0 0 46 3"><rect x="0" y="0" width="2" height="2" fill="#7a7a7a"/><rect x="6" y="0" width="2" height="2" fill="#7a7a7a"/><rect x="12" y="0" width="2" height="2" fill="#7a7a7a"/><rect x="18" y="0" width="2" height="2" fill="#7a7a7a"/><rect x="24" y="0" width="2" height="2" fill="#7a7a7a"/><rect x="30" y="0" width="2" height="2" fill="#7a7a7a"/><rect x="36" y="0" width="2" height="2" fill="#7a7a7a"/><rect x="42" y="0" width="2" height="2" fill="#7a7a7a"/></svg>
<svg class="a" style="left:122px;top:1330px" width="46" height="3" viewBox="0 0 46 3"><rect x="0" y="0" width="2" height="2" fill="#7a7a7a"/><rect x="6" y="0" width="2" height="2" fill="#7a7a7a"/><rect x="12" y="0" width="2" height="2" fill="#7a7a7a"/><rect x="18" y="0" width="2" height="2" fill="#7a7a7a"/><rect x="24" y="0" width="2" height="2" fill="#7a7a7a"/><rect x="30" y="0" width="2" height="2" fill="#7a7a7a"/><rect x="36" y="0" width="2" height="2" fill="#7a7a7a"/><rect x="42" y="0" width="2" height="2" fill="#7a7a7a"/></svg>
<div class="a" style="left:130px;top:1224px;width:24px;height:24px;background:#5a5d5f;"></div>
<svg class="a" style="left:127px;top:1284px" width="30" height="29" viewBox="0 0 30 29"><rect x="1" y="1" width="15" height="12" fill="#4d9ed1"/><rect x="3" y="4" width="11" height="6" fill="#a0c8e0"/><rect x="4" y="4" width="9" height="6" fill="none" stroke="#2d5f80" stroke-width="1"/><rect x="18" y="1" width="11" height="12" fill="#8f8f8f"/><rect x="21" y="4" width="5" height="6" fill="#5c5f61"/><rect x="1" y="16" width="28" height="12" fill="#8f8f8f"/><rect x="4" y="19" width="22" height="6" fill="#5c5f61"/></svg>
<svg class="a" style="left:126px;top:1345px" width="32" height="34" viewBox="0 0 32 34"><path d="M0.5 31.5 L11 19 L14.5 22.5 Z" fill="#8a8a8a"/><path d="M15 17 L24 8" stroke="#6a6a6a" stroke-width="6"/><ellipse cx="15" cy="17" rx="9" ry="5.8" transform="rotate(45 15 17)" fill="#ad7fcf"/><ellipse cx="24.5" cy="7.5" rx="6.8" ry="4.2" transform="rotate(45 24.5 7.5)" fill="#b88ad8"/></svg>
<svg class="a" style="left:129px;top:1397px" width="26" height="26" viewBox="0 0 26 26"><path d="M3 3 L23 23 M23 3 L3 23" stroke="#e0574a" stroke-width="4.2"/></svg>
<div class="a" style="left:182px;top:1048px;width:49px;height:49px;background:#55585b;border:1.5px solid #6b6e71;border-radius:6px"></div>
<div class="a" style="left:232px;top:1048px;width:49px;height:49px;background:#55585b;border:1.5px solid #6b6e71;border-radius:6px"></div>
<div class="a" style="left:294px;top:1048px;width:49px;height:49px;background:#55585b;border:1.5px solid #6b6e71;border-radius:6px"></div>
<svg class="a" style="left:192px;top:1058px" width="30" height="30" viewBox="0 0 30 30"><circle cx="14" cy="14" r="12.5" fill="#445a43" stroke="#5ba64f" stroke-width="2.8"/><path d="M7 11 L13 19.5 L21 8.5" fill="none" stroke="#5cb84a" stroke-width="3"/></svg>
<svg class="a" style="left:240px;top:1058px" width="34" height="30" viewBox="0 0 34 30"><circle cx="16" cy="14" r="12.5" fill="#a27a3a" stroke="#e39e3a" stroke-width="2.6"/><rect x="0" y="3" width="32" height="1.6" fill="#8a7a5e"/><rect x="0" y="8" width="32" height="1.6" fill="#8a7a5e"/><rect x="0" y="13" width="32" height="1.6" fill="#8a7a5e"/><rect x="0" y="18" width="32" height="1.6" fill="#8a7a5e"/><rect x="0" y="23" width="32" height="1.6" fill="#8a7a5e"/><rect x="0" y="27" width="32" height="1.6" fill="#8a7a5e"/></svg>
<svg class="a" style="left:288px;top:1052px" width="3" height="46" viewBox="0 0 3 46"><rect x="0" y="0" width="2" height="2" fill="#7a7a7a"/><rect x="0" y="6" width="2" height="2" fill="#7a7a7a"/><rect x="0" y="12" width="2" height="2" fill="#7a7a7a"/><rect x="0" y="18" width="2" height="2" fill="#7a7a7a"/><rect x="0" y="24" width="2" height="2" fill="#7a7a7a"/><rect x="0" y="30" width="2" height="2" fill="#7a7a7a"/><rect x="0" y="36" width="2" height="2" fill="#7a7a7a"/><rect x="0" y="42" width="2" height="2" fill="#7a7a7a"/></svg>
<svg class="a" style="left:400px;top:1052px" width="3" height="46" viewBox="0 0 3 46"><rect x="0" y="0" width="2" height="2" fill="#7a7a7a"/><rect x="0" y="6" width="2" height="2" fill="#7a7a7a"/><rect x="0" y="12" width="2" height="2" fill="#7a7a7a"/><rect x="0" y="18" width="2" height="2" fill="#7a7a7a"/><rect x="0" y="24" width="2" height="2" fill="#7a7a7a"/><rect x="0" y="30" width="2" height="2" fill="#7a7a7a"/><rect x="0" y="36" width="2" height="2" fill="#7a7a7a"/><rect x="0" y="42" width="2" height="2" fill="#7a7a7a"/></svg>
<svg class="a" style="left:303px;top:1057px" width="36" height="32" viewBox="0 0 36 32"><rect x="7.5" y="1" width="2" height="24" fill="#a0a0a0"/><path d="M1 21 L8.5 30 L16 21" fill="none" stroke="#a0a0a0" stroke-width="2.5"/></svg>
<div class="a t" style="left:319.5px;top:1049.6px;font-family:'Liberation Sans',sans-serif;font-size:24px;color:#4aa0d8;">a</div>
<div class="a t" style="left:320.5px;top:1067.6px;font-family:'Liberation Sans',sans-serif;font-size:24px;color:#b779d6;">z</div>
<svg class="a" style="left:354px;top:1057px" width="30" height="32" viewBox="0 0 30 32"><rect x="6.5" y="1" width="2" height="24" fill="#a0a0a0"/><path d="M1 21 L7.5 30 L14 21" fill="none" stroke="#a0a0a0" stroke-width="2.5"/><rect x="10" y="1" width="18" height="4" fill="#4aa0d8"/><rect x="14" y="9" width="14" height="4" fill="#e39e3a"/><rect x="18" y="17" width="10" height="4" fill="#b779d6"/><rect x="22" y="25" width="6" height="4" fill="#33b143"/></svg>
<svg class="a" style="left:417px;top:1057px" width="26" height="32" viewBox="0 0 26 32"><rect x="1" y="1" width="24" height="3" fill="#a6a6a6"/><path d="M13 5 L20 12 H6 Z" fill="#3e92d2"/><path d="M13 22 L20 15 H6 Z" fill="#3e92d2"/><rect x="1" y="26" width="24" height="3" fill="#a6a6a6"/></svg>
<svg class="a" style="left:467px;top:1057px" width="26" height="32" viewBox="0 0 26 32"><path d="M13 8 L20 1 H6 Z" fill="#3e92d2"/><rect x="1" y="10" width="24" height="3" fill="#a6a6a6"/><rect x="1" y="17" width="24" height="3" fill="#a6a6a6"/><path d="M13 22 L20 29 H6 Z" fill="#3e92d2"/></svg>
<svg class="a" style="left:512px;top:1052px" width="3" height="46" viewBox="0 0 3 46"><rect x="0" y="0" width="2" height="2" fill="#7a7a7a"/><rect x="0" y="6" width="2" height="2" fill="#7a7a7a"/><rect x="0" y="12" width="2" height="2" fill="#7a7a7a"/><rect x="0" y="18" width="2" height="2" fill="#7a7a7a"/><rect x="0" y="24" width="2" height="2" fill="#7a7a7a"/><rect x="0" y="30" width="2" height="2" fill="#7a7a7a"/><rect x="0" y="36" width="2" height="2" fill="#7a7a7a"/><rect x="0" y="42" width="2" height="2" fill="#7a7a7a"/></svg>
<svg class="a" style="left:530px;top:1059px" width="25" height="25" viewBox="0 0 25 25"><path d="M12.5 1 L24 12 H17 V24 H8 V12 H1 Z" fill="#5d5f61"/></svg>
<svg class="a" style="left:580px;top:1059px" width="25" height="25" viewBox="0 0 25 25"><path d="M12.5 24 L24 13 H17 V1 H8 V13 H1 Z" fill="#5d5f61"/></svg>
<svg class="a" style="left:629px;top:1056px" width="30" height="33" viewBox="0 0 30 33"><rect x="2" y="3" width="20" height="28" fill="none" stroke="#8a8a8a" stroke-width="3.5"/><path d="M8 26 C16 25 19 18 19 11 H14 L21 1 L28 11 H23 C23 20 18 26 8 26 Z" fill="#2fb13a"/></svg>
<svg class="a" style="left:677px;top:1056px" width="34" height="33" viewBox="0 0 34 33"><rect x="2" y="4" width="15" height="19" fill="none" stroke="#8a8a8a" stroke-width="3.5"/><rect x="8" y="12" width="15" height="18" fill="none" stroke="#8a8a8a" stroke-width="3.5"/><circle cx="19" cy="9" r="8.5" fill="#9fd0f0" stroke="#3e92d2" stroke-width="1.5"/><path d="M19 4 V9 H24" fill="none" stroke="#333" stroke-width="1.4"/><path d="M22 24 H32 L27 30 Z" fill="#dddddd"/></svg>
<svg class="a" style="left:729px;top:1059px" width="28" height="28" viewBox="0 0 28 28"><circle cx="14.0" cy="14.0" r="10.08" fill="#3e92d2"/><rect x="11.34" y="0" width="5.32" height="8.4" fill="#3e92d2" transform="rotate(0 14.0 14.0)"/><rect x="11.34" y="0" width="5.32" height="8.4" fill="#3e92d2" transform="rotate(45 14.0 14.0)"/><rect x="11.34" y="0" width="5.32" height="8.4" fill="#3e92d2" transform="rotate(90 14.0 14.0)"/><rect x="11.34" y="0" width="5.32" height="8.4" fill="#3e92d2" transform="rotate(135 14.0 14.0)"/><rect x="11.34" y="0" width="5.32" height="8.4" fill="#3e92d2" transform="rotate(180 14.0 14.0)"/><rect x="11.34" y="0" width="5.32" height="8.4" fill="#3e92d2" transform="rotate(225 14.0 14.0)"/><rect x="11.34" y="0" width="5.32" height="8.4" fill="#3e92d2" transform="rotate(270 14.0 14.0)"/><rect x="11.34" y="0" width="5.32" height="8.4" fill="#3e92d2" transform="rotate(315 14.0 14.0)"/><circle cx="14.0" cy="14.0" r="3.9200000000000004" fill="#3c3f41"/></svg>
<svg class="a" style="left:749px;top:1081px" width="11" height="7" viewBox="0 0 11 7"><path d="M0 0 H11 L5.5 7 Z" fill="#dddddd"/></svg>
<svg class="a" style="left:871px;top:1054px" width="28" height="28" viewBox="0 0 28 28"><g transform="scale(1.0)"><circle cx="14" cy="14" r="12.4" fill="#445a43" stroke="#5ba64f" stroke-width="3"/><path d="M7 11 L13 19.5 L21 8.5" fill="none" stroke="#5cb84a" stroke-width="3"/></g></svg>
<div class="a t" style="left:908.5px;top:1053.3px;font-family:'Liberation Sans',sans-serif;font-size:28.35px;color:#bbbbbb;line-height:1">Tests passed: 34<span style="color:#8e8e8e"> of 34 tests – 29 s 240 ms</span></div>
<div class="a" style="left:176px;top:1106px;width:688px;height:512px;overflow:hidden"><div class="a" style="left:-176px;top:-1106px;width:2784px;height:1778px">
<div class="a" style="left:176px;top:1078px;width:688px;height:36px;background:#0d293e;"></div>
<svg class="a" style="left:187px;top:1090px" width="18" height="16" viewBox="0 0 18 16"><path d="M0 0 H18 L9 16 Z" fill="#adadad"/></svg>
<svg class="a" style="left:224px;top:1082px" width="28" height="28" viewBox="0 0 28 28"><g transform="scale(1.0)"><circle cx="14" cy="14" r="12.4" fill="#445a43" stroke="#5ba64f" stroke-width="3"/><path d="M7 11 L13 19.5 L21 8.5" fill="none" stroke="#5cb84a" stroke-width="3"/></g></svg>
<div class="a" style="left:259px;top:1078px;width:601px;height:36px;display:flex;align-items:baseline;line-height:36px;white-space:pre;font-family:'Liberation Sans',sans-serif"><span style="flex:0 1 auto;overflow:hidden;font-size:28px;color:#bbbbbb;-webkit-text-stroke:0.3px #bbbbbb">Test Results</span><span style="flex:none;margin-left:11px;margin-left:auto;padding-left:11px;font-size:23.5px;color:#8b8b8b">29 s 240 ms</span></div>
<svg class="a" style="left:223px;top:1126px" width="18" height="16" viewBox="0 0 18 16"><path d="M0 0 H18 L9 16 Z" fill="#adadad"/></svg>
<svg class="a" style="left:260px;top:1118px" width="28" height="28" viewBox="0 0 28 28"><g transform="scale(1.0)"><circle cx="14" cy="14" r="12.4" fill="#445a43" stroke="#5ba64f" stroke-width="3"/><path d="M7 11 L13 19.5 L21 8.5" fill="none" stroke="#5cb84a" stroke-width="3"/></g></svg>
<div class="a" style="left:295px;top:1114px;width:565px;height:36px;display:flex;align-items:baseline;line-height:36px;white-space:pre;font-family:'Liberation Sans',sans-serif"><span style="flex:0 1 auto;overflow:hidden;font-size:28px;color:#bbbbbb;-webkit-text-stroke:0.3px #bbbbbb">/var/www/web/modules/contrib/exa</span><span style="flex:none;margin-left:11px;margin-left:auto;padding-left:11px;font-size:23.5px;color:#8b8b8b">29 s 240 ms</span></div>
<svg class="a" style="left:259px;top:1162px" width="18" height="16" viewBox="0 0 18 16"><path d="M0 0 H18 L9 16 Z" fill="#adadad"/></svg>
<svg class="a" style="left:296px;top:1154px" width="28" height="28" viewBox="0 0 28 28"><g transform="scale(1.0)"><circle cx="14" cy="14" r="12.4" fill="#445a43" stroke="#5ba64f" stroke-width="3"/><path d="M7 11 L13 19.5 L21 8.5" fill="none" stroke="#5cb84a" stroke-width="3"/></g></svg>
<div class="a" style="left:331px;top:1150px;width:529px;height:36px;display:flex;align-items:baseline;line-height:36px;white-space:pre;font-family:'Liberation Sans',sans-serif"><span style="flex:0 1 auto;overflow:hidden;font-size:28px;color:#bbbbbb;-webkit-text-stroke:0.3px #bbbbbb">Drupal\Tests\phpunit_example\Fu</span><span style="flex:none;margin-left:11px;margin-left:auto;padding-left:11px;font-size:23.5px;color:#8b8b8b">29 s 60 ms</span></div>
<svg class="a" style="left:332px;top:1190px" width="28" height="28" viewBox="0 0 28 28"><g transform="scale(1.0)"><circle cx="14" cy="14" r="12.4" fill="#445a43" stroke="#5ba64f" stroke-width="3"/><path d="M7 11 L13 19.5 L21 8.5" fill="none" stroke="#5cb84a" stroke-width="3"/></g></svg>
<div class="a" style="left:367px;top:1186px;width:493px;height:36px;display:flex;align-items:baseline;line-height:36px;white-space:pre;font-family:'Liberation Sans',sans-serif"><span style="flex:0 1 auto;overflow:hidden;font-size:28px;color:#bbbbbb;-webkit-text-stroke:0.3px #bbbbbb">testPhpUnitExampleLink</span><span style="flex:none;margin-left:11px;margin-left:auto;padding-left:11px;font-size:23.5px;color:#8b8b8b">15 s 570 ms</span></div>
<svg class="a" style="left:332px;top:1226px" width="28" height="28" viewBox="0 0 28 28"><g transform="scale(1.0)"><circle cx="14" cy="14" r="12.4" fill="#445a43" stroke="#5ba64f" stroke-width="3"/><path d="M7 11 L13 19.5 L21 8.5" fill="none" stroke="#5cb84a" stroke-width="3"/></g></svg>
<div class="a" style="left:367px;top:1222px;width:493px;height:36px;display:flex;align-items:baseline;line-height:36px;white-space:pre;font-family:'Liberation Sans',sans-serif"><span style="flex:0 1 auto;overflow:hidden;font-size:28px;color:#bbbbbb;-webkit-text-stroke:0.3px #bbbbbb">testPhpUnitExampleMenu</span><span style="flex:none;margin-left:11px;margin-left:auto;padding-left:11px;font-size:23.5px;color:#8b8b8b">13 s 490 ms</span></div>
<svg class="a" style="left:261px;top:1268px" width="16" height="18" viewBox="0 0 16 18"><path d="M0 0 L16 9 L0 18 Z" fill="#adadad"/></svg>
<svg class="a" style="left:296px;top:1262px" width="28" height="28" viewBox="0 0 28 28"><g transform="scale(1.0)"><circle cx="14" cy="14" r="12.4" fill="#445a43" stroke="#5ba64f" stroke-width="3"/><path d="M7 11 L13 19.5 L21 8.5" fill="none" stroke="#5cb84a" stroke-width="3"/></g></svg>
<div class="a" style="left:331px;top:1258px;width:529px;height:36px;display:flex;align-items:baseline;line-height:36px;white-space:pre;font-family:'Liberation Sans',sans-serif"><span style="flex:0 1 auto;overflow:hidden;font-size:28px;color:#bbbbbb;-webkit-text-stroke:0.3px #bbbbbb">Drupal\Tests\phpunit_example\Unit\A</span><span style="flex:none;margin-left:11px;margin-left:auto;padding-left:11px;font-size:23.5px;color:#8b8b8b">40 ms</span></div>
<svg class="a" style="left:259px;top:1306px" width="18" height="16" viewBox="0 0 18 16"><path d="M0 0 H18 L9 16 Z" fill="#adadad"/></svg>
<svg class="a" style="left:296px;top:1298px" width="28" height="28" viewBox="0 0 28 28"><g transform="scale(1.0)"><circle cx="14" cy="14" r="12.4" fill="#445a43" stroke="#5ba64f" stroke-width="3"/><path d="M7 11 L13 19.5 L21 8.5" fill="none" stroke="#5cb84a" stroke-width="3"/></g></svg>
<div class="a" style="left:331px;top:1294px;width:529px;height:36px;display:flex;align-items:baseline;line-height:36px;white-space:pre;font-family:'Liberation Sans',sans-serif"><span style="flex:0 1 auto;overflow:hidden;font-size:28px;color:#bbbbbb;-webkit-text-stroke:0.3px #bbbbbb">Drupal\Tests\phpunit_example\Unit\I</span><span style="flex:none;margin-left:11px;margin-left:auto;padding-left:11px;font-size:23.5px;color:#8b8b8b">120 ms</span></div>
<svg class="a" style="left:332px;top:1334px" width="28" height="28" viewBox="0 0 28 28"><g transform="scale(1.0)"><circle cx="14" cy="14" r="12.4" fill="#445a43" stroke="#5ba64f" stroke-width="3"/><path d="M7 11 L13 19.5 L21 8.5" fill="none" stroke="#5cb84a" stroke-width="3"/></g></svg>
<div class="a" style="left:367px;top:1330px;width:493px;height:36px;display:flex;align-items:baseline;line-height:36px;white-space:pre;font-family:'Liberation Sans',sans-serif"><span style="flex:0 1 auto;overflow:hidden;font-size:28px;color:#bbbbbb;-webkit-text-stroke:0.3px #bbbbbb">testSimpleMockDisplayManager</span><span style="flex:none;margin-left:11px;margin-left:auto;padding-left:11px;font-size:23.5px;color:#8b8b8b">120 ms</span></div>
<svg class="a" style="left:259px;top:1378px" width="18" height="16" viewBox="0 0 18 16"><path d="M0 0 H18 L9 16 Z" fill="#adadad"/></svg>
<svg class="a" style="left:296px;top:1370px" width="28" height="28" viewBox="0 0 28 28"><g transform="scale(1.0)"><circle cx="14" cy="14" r="12.4" fill="#445a43" stroke="#5ba64f" stroke-width="3"/><path d="M7 11 L13 19.5 L21 8.5" fill="none" stroke="#5cb84a" stroke-width="3"/></g></svg>
<div class="a" style="left:331px;top:1366px;width:529px;height:36px;display:flex;align-items:baseline;line-height:36px;white-space:pre;font-family:'Liberation Sans',sans-serif"><span style="flex:0 1 auto;overflow:hidden;font-size:28px;color:#bbbbbb;-webkit-text-stroke:0.3px #bbbbbb">Drupal\Tests\phpunit_example\Unit\P</span><span style="flex:none;margin-left:11px;margin-left:auto;padding-left:11px;font-size:23.5px;color:#8b8b8b">20 ms</span></div>
<svg class="a" style="left:297px;top:1412px" width="16" height="18" viewBox="0 0 16 18"><path d="M0 0 L16 9 L0 18 Z" fill="#adadad"/></svg>
<svg class="a" style="left:332px;top:1406px" width="28" height="28" viewBox="0 0 28 28"><g transform="scale(1.0)"><circle cx="14" cy="14" r="12.4" fill="#445a43" stroke="#5ba64f" stroke-width="3"/><path d="M7 11 L13 19.5 L21 8.5" fill="none" stroke="#5cb84a" stroke-width="3"/></g></svg>
<div class="a" style="left:367px;top:1402px;width:493px;height:36px;display:flex;align-items:baseline;line-height:36px;white-space:pre;font-family:'Liberation Sans',sans-serif"><span style="flex:0 1 auto;overflow:hidden;font-size:28px;color:#bbbbbb;-webkit-text-stroke:0.3px #bbbbbb">testPrivateAdd</span><span style="flex:none;margin-left:11px;margin-left:auto;padding-left:11px;font-size:23.5px;color:#8b8b8b">10 ms</span></div>
<svg class="a" style="left:297px;top:1448px" width="16" height="18" viewBox="0 0 16 18"><path d="M0 0 L16 9 L0 18 Z" fill="#adadad"/></svg>
<svg class="a" style="left:332px;top:1442px" width="28" height="28" viewBox="0 0 28 28"><g transform="scale(1.0)"><circle cx="14" cy="14" r="12.4" fill="#445a43" stroke="#5ba64f" stroke-width="3"/><path d="M7 11 L13 19.5 L21 8.5" fill="none" stroke="#5cb84a" stroke-width="3"/></g></svg>
<div class="a" style="left:367px;top:1438px;width:493px;height:36px;display:flex;align-items:baseline;line-height:36px;white-space:pre;font-family:'Liberation Sans',sans-serif"><span style="flex:0 1 auto;overflow:hidden;font-size:28px;color:#bbbbbb;-webkit-text-stroke:0.3px #bbbbbb">testPrivateAddBadData</span><span style="flex:none;margin-left:11px;margin-left:auto;padding-left:11px;font-size:23.5px;color:#8b8b8b">0 ms</span></div>
<svg class="a" style="left:295px;top:1486px" width="18" height="16" viewBox="0 0 18 16"><path d="M0 0 H18 L9 16 Z" fill="#adadad"/></svg>
<svg class="a" style="left:332px;top:1478px" width="28" height="28" viewBox="0 0 28 28"><g transform="scale(1.0)"><circle cx="14" cy="14" r="12.4" fill="#445a43" stroke="#5ba64f" stroke-width="3"/><path d="M7 11 L13 19.5 L21 8.5" fill="none" stroke="#5cb84a" stroke-width="3"/></g></svg>
<div class="a" style="left:367px;top:1474px;width:493px;height:36px;display:flex;align-items:baseline;line-height:36px;white-space:pre;font-family:'Liberation Sans',sans-serif"><span style="flex:0 1 auto;overflow:hidden;font-size:28px;color:#bbbbbb;-webkit-text-stroke:0.3px #bbbbbb">testProtectedAdd</span><span style="flex:none;margin-left:11px;margin-left:auto;padding-left:11px;font-size:23.5px;color:#8b8b8b">10 ms</span></div>
<svg class="a" style="left:368px;top:1514px" width="28" height="28" viewBox="0 0 28 28"><g transform="scale(1.0)"><circle cx="14" cy="14" r="12.4" fill="#445a43" stroke="#5ba64f" stroke-width="3"/><path d="M7 11 L13 19.5 L21 8.5" fill="none" stroke="#5cb84a" stroke-width="3"/></g></svg>
<div class="a" style="left:403px;top:1510px;width:457px;height:36px;display:flex;align-items:baseline;line-height:36px;white-space:pre;font-family:'Liberation Sans',sans-serif"><span style="flex:0 1 auto;overflow:hidden;font-size:28px;color:#bbbbbb;-webkit-text-stroke:0.3px #bbbbbb">with data set #0</span><span style="flex:none;margin-left:11px;margin-left:auto;padding-left:11px;font-size:23.5px;color:#8b8b8b">10 ms</span></div>
<svg class="a" style="left:295px;top:1558px" width="18" height="16" viewBox="0 0 18 16"><path d="M0 0 H18 L9 16 Z" fill="#adadad"/></svg>
<svg class="a" style="left:332px;top:1550px" width="28" height="28" viewBox="0 0 28 28"><g transform="scale(1.0)"><circle cx="14" cy="14" r="12.4" fill="#445a43" stroke="#5ba64f" stroke-width="3"/><path d="M7 11 L13 19.5 L21 8.5" fill="none" stroke="#5cb84a" stroke-width="3"/></g></svg>
<div class="a" style="left:367px;top:1546px;width:493px;height:36px;display:flex;align-items:baseline;line-height:36px;white-space:pre;font-family:'Liberation Sans',sans-serif"><span style="flex:0 1 auto;overflow:hidden;font-size:28px;color:#bbbbbb;-webkit-text-stroke:0.3px #bbbbbb">testProtectedAddBadData</span><span style="flex:none;margin-left:11px;margin-left:auto;padding-left:11px;font-size:23.5px;color:#8b8b8b">0 ms</span></div>
<svg class="a" style="left:368px;top:1586px" width="28" height="28" viewBox="0 0 28 28"><g transform="scale(1.0)"><circle cx="14" cy="14" r="12.4" fill="#445a43" stroke="#5ba64f" stroke-width="3"/><path d="M7 11 L13 19.5 L21 8.5" fill="none" stroke="#5cb84a" stroke-width="3"/></g></svg>
<div class="a" style="left:403px;top:1582px;width:457px;height:36px;display:flex;align-items:baseline;line-height:36px;white-space:pre;font-family:'Liberation Sans',sans-serif"><span style="flex:0 1 auto;overflow:hidden;font-size:28px;color:#bbbbbb;-webkit-text-stroke:0.3px #bbbbbb">with data set #0</span><span style="flex:none;margin-left:11px;margin-left:auto;padding-left:11px;font-size:23.5px;color:#8b8b8b">0 ms</span></div>
</div></div>
<div class="a t" style="left:894.5px;top:1223.7px;font-family:'Liberation Mono',monospace;font-size:26.666666666666668px;color:#e2e2e2;transform:scaleY(1.1);transform-origin:0 76%;-webkit-text-stroke:0.5px currentColor">Time: 46.62 seconds, Memory: 6.00MB</div>
<div class="a t" style="left:894.5px;top:1364.3px;font-family:'Liberation Mono',monospace;font-size:26.666666666666668px;color:#e2e2e2;transform:scaleY(1.1);transform-origin:0 76%;-webkit-text-stroke:0.5px currentColor">OK (34 tests, 41 assertions)</div>
<div class="a t" style="left:894.5px;top:1503.9px;font-family:'Liberation Mono',monospace;font-size:26.666666666666668px;color:#e2e2e2;transform:scaleY(1.1);transform-origin:0 76%;-webkit-text-stroke:0.5px currentColor">Process finished with exit code 0</div>
<svg class="a" style="left:2628px;top:1122px" width="25" height="25" viewBox="0 0 25 25"><path d="M12.5 1 L24 12 H17 V24 H8 V12 H1 Z" fill="#5d5f61"/></svg>
<svg class="a" style="left:2628px;top:1172px" width="25" height="25" viewBox="0 0 25 25"><path d="M12.5 24 L24 13 H17 V1 H8 V13 H1 Z" fill="#5d5f61"/></svg>
<svg class="a" style="left:2625px;top:1219px" width="30" height="31" viewBox="0 0 30 31"><rect x="1" y="1" width="20" height="2.5" fill="#9a9a9a"/><rect x="9" y="9" width="8" height="2.5" fill="#9a9a9a"/><rect x="12" y="17" width="8" height="2.5" fill="#9a9a9a"/><rect x="1" y="25" width="20" height="2.5" fill="#9a9a9a"/><path d="M22 2 H26 Q28 2 28 5 V8 Q28 10 25 10 H19" fill="none" stroke="#3e9ad8" stroke-width="2.3"/><path d="M16 10 L22 6 V14 Z" fill="#3e9ad8"/><path d="M8 10 H3 Q1 10 1 13 V15 Q1 18 4 18 H8" fill="none" stroke="#3e9ad8" stroke-width="2.3"/><path d="M11 18 L5 14 V22 Z" fill="#3e9ad8"/><path d="M22 18 H26 Q28 18 28 21 V23 Q28 26 25 26 H19" fill="none" stroke="#3e9ad8" stroke-width="2.3"/><path d="M16 26 L22 22 V30 Z" fill="#3e9ad8"/></svg>
<div class="a" style="left:2616px;top:1260px;width:50px;height:49px;background:#55585b;border:1.5px solid #6b6e71;border-radius:6px"></div>
<svg class="a" style="left:2626px;top:1269px" width="30" height="29" viewBox="0 0 30 29"><rect x="1.5" y="2.5" width="26" height="24" fill="none" stroke="#8f8f8f" stroke-width="3"/><rect x="14" y="0" width="6" height="12" fill="#b26fd0"/><path d="M8 11 H26 L17 21 Z" fill="#b26fd0"/></svg>
<svg class="a" style="left:2626px;top:1319px" width="29" height="30" viewBox="0 0 29 30"><rect x="5" y="1" width="19" height="5" fill="#9a9a9a"/><rect x="0" y="3" width="29" height="14" rx="2" fill="#3e9ad8"/><rect x="5" y="11" width="19" height="18" fill="#9a9a9a"/><rect x="9" y="14" width="11" height="14" fill="#4a4d50"/><rect x="11" y="17" width="7" height="1.3" fill="#cfcfcf"/><rect x="11" y="20" width="7" height="1.3" fill="#cfcfcf"/><rect x="11" y="23" width="7" height="1.3" fill="#cfcfcf"/></svg>
<svg class="a" style="left:2626px;top:1368px" width="29" height="32" viewBox="0 0 29 32"><path d="M10 4 Q14 -1 18 4" fill="none" stroke="#9a9a9a" stroke-width="2"/><rect x="0" y="5" width="29" height="3" fill="#9a9a9a"/><path d="M3 10 H26 L24 30 Q23 31 20 31 H9 Q6 31 5 30 Z" fill="#3e9ad8"/><rect x="8" y="13" width="2" height="15" fill="#2a6a98"/><rect x="13.5" y="13" width="2" height="15" fill="#2a6a98"/><rect x="19" y="13" width="2" height="15" fill="#2a6a98"/></svg>
</div>
</body></html>
